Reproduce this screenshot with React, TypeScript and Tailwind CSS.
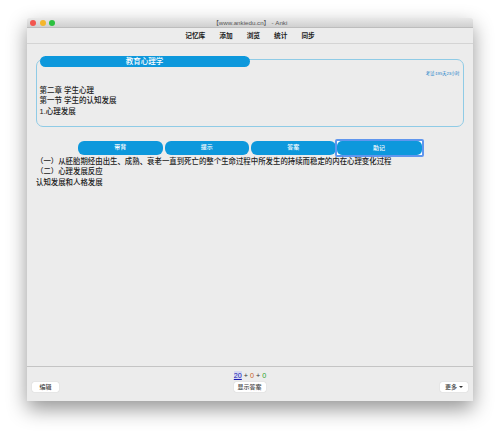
const font = { fontFamily: '"Liberation Sans", "Noto Sans CJK SC", sans-serif' };

const menuItems = ['记忆库', '添加', '浏览', '统计', '同步'];
const studyButtons = ['带背', '提示', '答案'];

function SmallButton({ label, width, caret }: { label: string; width: string; caret?: boolean }) {
  return (
    <button className={`${width} h-[10px] flex items-center justify-center gap-[2px] bg-white rounded-[2px] text-[6px] font-medium leading-[10px] text-[#444] shadow-[0_0_1px_rgba(0,0,0,0.25)]`}>
      {label}
      {caret && <span className="w-0 h-0 border-x-[2px] border-x-transparent border-t-[2px] border-t-[#333]" />}
    </button>
  );
}

export default function App() {
  return (
    <div className="w-[500px] h-[436px] bg-white pt-[18px] pl-[27px] overflow-hidden" style={font}>
      <div className="w-[446px] h-[383px] flex flex-col bg-[#ececec] rounded-t-[3px] shadow-[0_8px_20px_rgba(0,0,0,0.42)]">
        {/* title bar */}
        <div className="h-[10px] shrink-0 flex items-center px-[3px] bg-gradient-to-b from-[#e8e8e8] to-[#d0d0d0] rounded-t-[3px] border-b border-[#bdbdbd] relative">
          <div className="flex gap-[3.5px]">
            <span className="w-[6px] h-[6px] rounded-full bg-[#f2554e]" />
            <span className="w-[6px] h-[6px] rounded-full bg-[#f5b62c]" />
            <span className="w-[6px] h-[6px] rounded-full bg-[#2cc13f]" />
          </div>
          <div className="absolute inset-0 pt-[1px] flex items-center justify-center text-[6.2px] text-[#555]">【www.ankiedu.cn】 - Anki</div>
        </div>

        {/* menu */}
        <div className="h-[15.5px] pt-[2px] shrink-0 flex items-center justify-center gap-[14px] border-b border-[#d4d4d4] text-[6.7px] font-bold text-[#222]">
          {menuItems.map((item) => (
            <span key={item}>{item}</span>
          ))}
        </div>

        {/* card */}
        <div className="flex-1 flex flex-col">
          <div className="relative ml-[9px] mt-[15px] w-[428px] h-[68.5px] border-[1.5px] border-[#8fcbe6] rounded-[7px] px-[2.5px]">
            <div className="absolute left-[2.5px] top-[-3.5px] w-[210px] h-[11px] rounded-full bg-[#0d98dc] text-white text-[7.5px] font-medium leading-[11px] text-center">教育心理学</div>
            <div className="text-right text-[4.2px] leading-[5px] text-[#1580c8] pt-[11.5px] pr-[1px]">考试:195天23小时</div>
            <div className="mt-[9.5px] text-[7.5px] font-medium leading-[10.5px] text-[#222]">
              <div>第二章 学生心理</div>
              <div>第一节 学生的认知发展</div>
              <div>1.心理发展</div>
            </div>
          </div>

          <div className="flex items-center ml-[51px] mt-[13px] gap-[2px] h-[15px]">
            {studyButtons.map((label) => (
              <button key={label} className="w-[84.5px] h-[14px] rounded-[6px] bg-[#0d98dc] text-white text-[6px] font-medium">{label}</button>
            ))}
            <button className="w-[89px] h-[18px] -ml-[3px] shrink-0 rounded-[2px] border-2 border-[#5f96ee] bg-white text-white text-[6px] font-medium">
              <span className="block h-full leading-[14px] rounded-[5px] bg-[#0d98dc]">助记</span>
            </button>
          </div>

          <div className="ml-[9px] mt-[2px] text-[7.42px] font-medium leading-[10.3px] text-[#222]">
            <div>（一）从胚胎期经由出生、成熟、衰老一直到死亡的整个生命过程中所发生的持续而稳定的内在心理变化过程</div>
            <div>（二）心理发展反应</div>
            <div>认知发展和人格发展</div>
          </div>
        </div>

        {/* bottom bar */}
        <div className="h-[35px] shrink-0 border-t border-[#c4c4c4] flex flex-col px-[5px]">
          <div className="h-[15px] pt-[3px] text-center text-[7.2px] font-medium leading-[11px] text-[#333]">
            <span className="text-[#1a1ab0] underline bg-[#d5d9f2]">20</span>
            {' + '}
            <span className="text-[#c9622a]">0</span>
            {' + '}
            <span className="text-[#2ba52b]">0</span>
          </div>
          <div className="flex items-center justify-between -mt-[0.5px]">
            <SmallButton label="编辑" width="w-[27px]" />
            <SmallButton label="显示答案" width="w-[32px]" />
            <SmallButton label="更多" width="w-[28px]" caret />
          </div>
        </div>
      </div>
    </div>
  );
}
